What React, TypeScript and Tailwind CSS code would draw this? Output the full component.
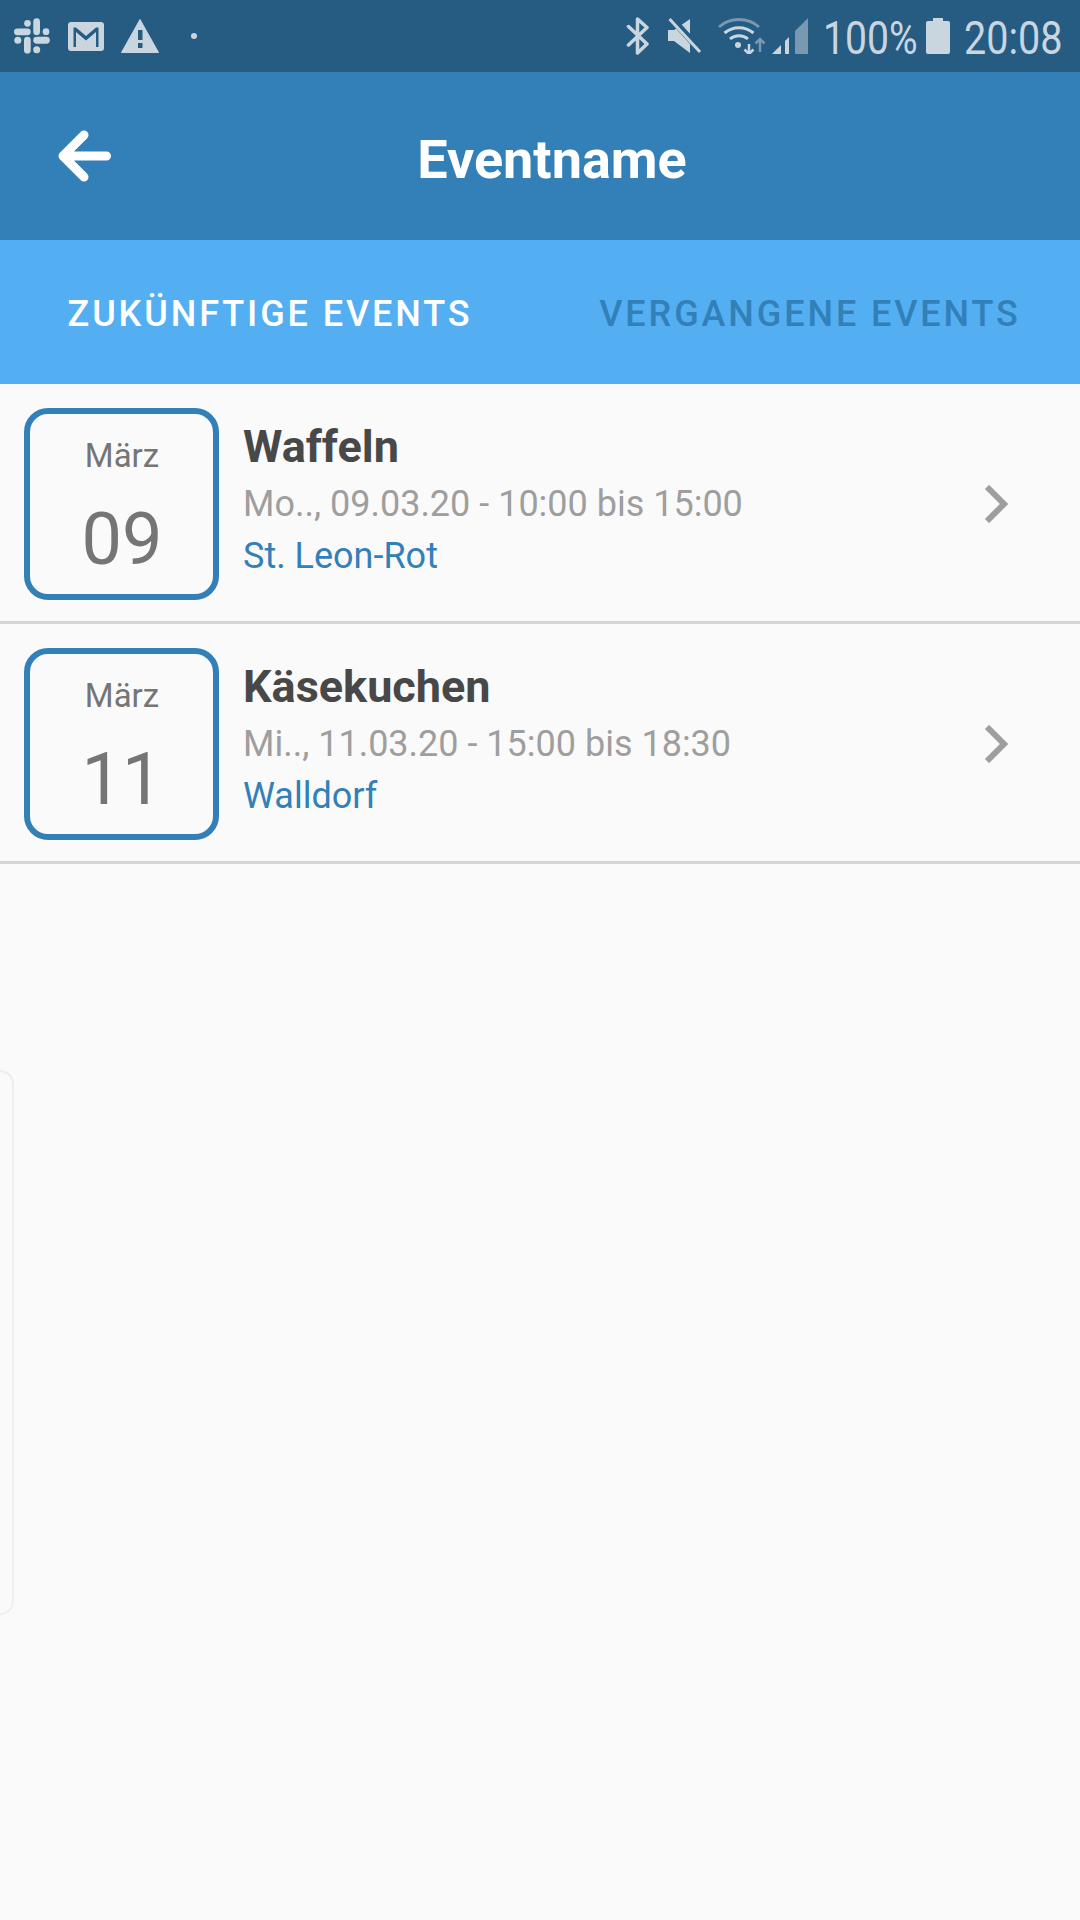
const events = [
  { month: 'März', day: '09', title: 'Waffeln', time: 'Mo.., 09.03.20 - 10:00 bis 15:00', place: 'St. Leon-Rot' },
  { month: 'März', day: '11', title: 'Käsekuchen', time: 'Mi.., 11.03.20 - 15:00 bis 18:30', place: 'Walldorf' },
];

function NotificationIcons() {
  return (
    <div className="flex items-center">
      {/* slack */}
      <svg width="36" height="36" viewBox="0 0 36 36" className="ml-[14px]" fill="#c9d6e0">
        <rect x="0" y="10.500" width="16.700" height="6.700" rx="3.350" />
        <circle cx="13.500" cy="5.300" r="3.350" />
        <rect x="19.300" y="0.300" width="6.700" height="16.700" rx="3.350" />
        <circle cx="32" cy="13.700" r="3.350" />
        <rect x="19.300" y="18.800" width="16.500" height="6.900" rx="3.450" />
        <circle cx="22.700" cy="31.700" r="3.500" />
        <rect x="10" y="18.800" width="6.700" height="16.700" rx="3.350" />
        <circle cx="3.800" cy="22.300" r="3.500" />
      </svg>
      {/* mail */}
      <svg width="36" height="29" viewBox="0 0 36 29" className="ml-[18px]">
        <rect width="36" height="29" rx="3" fill="#c9d6e0" />
        <path d="M5.500 25V5.500h2.500L18 14 28 5.500h2.500V25H28V10L18 18.500 8 10v15z" fill="#265c82" />
      </svg>
      {/* warning */}
      <svg width="38" height="34" viewBox="0 0 38 34" className="ml-[17px]">
        <path d="M19 0.500 37.500 33.500H.5z" fill="#c9d6e0" stroke="#c9d6e0" strokeWidth="1" strokeLinejoin="round" />
        <rect x="17" y="11" width="4.500" height="10" fill="#265c82" />
        <rect x="17" y="24" width="4.500" height="5" fill="#265c82" />
      </svg>
      <div className="ml-[32px] h-[6px] w-[6px] rounded-full bg-[#c9d6e0]" />
    </div>
  );
}

function SystemIcons() {
  return (
    <div className="flex items-center pr-[20px] text-[#c9d6e0]">
      {/* bluetooth */}
      <svg width="24" height="38" viewBox="0 0 24 38" fill="none" stroke="#c9d6e0" strokeWidth="3.500" strokeLinecap="round" strokeLinejoin="round">
        <path d="M2.500 9.500 21 27 11.500 36V2L21 10.500 2.500 28" />
      </svg>
      {/* muted speaker */}
      <svg width="34" height="36" viewBox="0 0 34 36" className="ml-[18px]">
        <path d="M0 12h6L22 1v34L6 23H0z" fill="#c9d6e0" />
        <path d="M3 0 33 33" stroke="#265c82" strokeWidth="7" />
        <path d="M1.500 1 32 34" stroke="#c9d6e0" strokeWidth="3" />
      </svg>
      {/* wifi with up/down arrows */}
      <svg width="48" height="36" viewBox="0 0 48 36" fill="none" className="ml-[16px]">
        <path d="M1 9C12 -1 30 -1 41 9" stroke="#c9d6e0" strokeOpacity="0.5" strokeWidth="3" />
        <path d="M6.500 15C15 8 27 8 35.500 15" stroke="#c9d6e0" strokeWidth="3" />
        <path d="M12 21C17 16.500 25 16.500 30 21" stroke="#c9d6e0" strokeWidth="3" />
        <circle cx="20" cy="27" r="3" fill="#c9d6e0" />
        <path d="M31 26v10M26.500 31.500 31 36l4.500-4.500" stroke="#c9d6e0" strokeWidth="2.500" />
        <path d="M42 34V21M37.500 25.500 42 21l4.500 4.500" stroke="#c9d6e0" strokeOpacity="0.5" strokeWidth="2.500" />
      </svg>
      {/* signal */}
      <svg width="36" height="36" viewBox="0 0 36 36" className="ml-[6px]">
        <path d="M0 36 9 27v9z" fill="#c9d6e0" />
        <path d="M13 23 17 19v17h-4z" fill="#c9d6e0" />
        <path d="M23 13 36 0v36H23z" fill="#c9d6e0" fillOpacity="0.5" />
      </svg>
      <span className="ml-[15px] mt-[3px] w-[92px] origin-left scale-x-85 whitespace-nowrap text-[46px] leading-none [font-family:Roboto,sans-serif]">100%</span>
      {/* battery */}
      <svg width="24" height="36" viewBox="0 0 24 36" className="ml-[11px]" fill="#c9d6e0">
        <path d="M7 0h10v3h5a2 2 0 0 1 2 2v29a2 2 0 0 1-2 2H2a2 2 0 0 1-2-2V5a2 2 0 0 1 2-2h5z" />
      </svg>
      <span className="ml-[14px] mt-[3px] w-[96px] origin-left scale-x-[.86] whitespace-nowrap text-[46px] leading-none [font-family:Roboto,sans-serif]">20:08</span>
    </div>
  );
}

function EventRow({ month, day, title, time, place }: { month: string; day: string; title: string; time: string; place: string }) {
  return (
    <div className="flex h-[240px] items-center border-b-[3px] border-[#d5d5d5] pt-[3px] pl-[24px] pr-[72px]">
      <div className="flex h-[192px] w-[195px] shrink-0 flex-col items-center rounded-[24px] border-[6px] border-[#337fb7] text-[#757575]">
        <div className="mt-[22px] pl-[1px] text-[33px] leading-[40px]">{month}</div>
        <div className="mt-[24px] pl-[1px] text-[72px] leading-[80px]">{day}</div>
      </div>
      <div className="ml-[24px] flex-1 pb-[5px]">
        <div className="text-[45px] font-bold leading-[52px] text-[#484848]">{title}</div>
        <div className="mt-[5px] text-[36px] leading-[52px] text-[#9e9e9e]">{time}</div>
        <div className="text-[36px] leading-[52px] text-[#337fb7]">{place}</div>
      </div>
      <svg width="24" height="38" viewBox="0 0 24 38" fill="none" stroke="#9e9e9e" strokeWidth="6">
        <path d="M3 2 20 19 3 36" />
      </svg>
    </div>
  );
}

export default function App() {
  return (
    <div className="relative h-[1920px] w-[1080px] overflow-hidden bg-[#fafafa] [font-family:Roboto,sans-serif]">
      <div className="flex h-[72px] items-center justify-between bg-[#265c82]">
        <NotificationIcons />
        <SystemIcons />
      </div>

      <div className="flex h-[168px] items-center bg-[#337fb7]">
        <div className="w-[120px] pl-[57px]">
          <svg width="56" height="52" viewBox="0 0 56 52" fill="none" stroke="#ffffff" strokeWidth="9" strokeLinecap="round" strokeLinejoin="round">
            <path d="M27 5 6 26l21 21M6 26h43.500" />
          </svg>
        </div>
        <div className="flex-1 pr-[96px] pt-[6px] text-center text-[54px] font-bold text-white">Eventname</div>
      </div>

      <div className="flex h-[144px] items-center bg-[#53aff2] pt-[4px] text-[36px] font-medium tracking-[2.900px]">
        <div className="flex-1 text-center text-white">ZUKÜNFTIGE EVENTS</div>
        <div className="flex-1 text-center text-[#337fb7]">VERGANGENE EVENTS</div>
      </div>

      {events.map((event) => (
        <EventRow key={event.day} {...event} />
      ))}

      {/* edge of a card peeking in from the left */}
      <div className="absolute left-[-20px] top-[1070px] h-[545px] w-[34px] rounded-[14px] border-2 border-[#eeeeee]" />
    </div>
  );
}
